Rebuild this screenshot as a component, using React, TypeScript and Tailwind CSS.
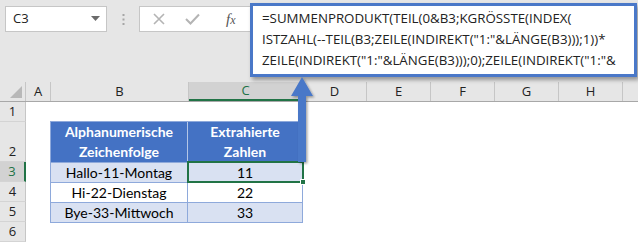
import React from "react";

const cols = [
  { l: "A", w: "w-[25px]" },
  { l: "B", w: "w-[138px]" },
  { l: "C", w: "w-[114px]" },
  { l: "D", w: "w-[64px]" },
  { l: "E", w: "w-[64px]" },
  { l: "F", w: "w-[64px]" },
  { l: "G", w: "w-[64px]" },
  { l: "H", w: "w-[64px]" },
];

const rows = [
  { n: "1", h: "h-[20px]" },
  { n: "2", h: "h-[40px]" },
  { n: "3", h: "h-[20px]", sel: true },
  { n: "4", h: "h-[20px]" },
  { n: "5", h: "h-[20px]" },
  { n: "6", h: "h-[20px]" },
];

const data = [
  { b: "Hallo-11-Montag", c: "11", bg: "bg-[#d9e1f2]" },
  { b: "Hi-22-Dienstag", c: "22", bg: "bg-white" },
  { b: "Bye-33-Mittwoch", c: "33", bg: "bg-[#d9e1f2]" },
];

export default function App() {
  return (
    <div className="relative w-[638px] h-[243px] overflow-hidden bg-white font-['Lato',sans-serif] text-black">
      {/* Formula bar area */}
      <div className="h-[82px] bg-[#e6e6e6] flex items-start pt-[6px] pl-[5px]">
        <div className="w-[102px] h-[26px] bg-white border border-[#c6c6c6] flex items-center justify-between pl-[7px] pr-[6px]">
          <span className="font-['Open_Sans',sans-serif] text-[13px] text-[#222]">C3</span>
          <svg width="9" height="6" viewBox="0 0 9 6">
            <path d="M0 0 L9 0 L4.5 5 Z" fill="#6b6b6b" />
          </svg>
        </div>
        <div className="w-[32px] h-[26px] flex items-center justify-center">
          <svg width="3" height="11" viewBox="0 0 3 11">
            <rect x="0.5" y="0" width="2" height="2" fill="#a6a6a6" />
            <rect x="0.5" y="4.5" width="2" height="2" fill="#a6a6a6" />
            <rect x="0.5" y="9" width="2" height="2" fill="#a6a6a6" />
          </svg>
        </div>
        <div className="w-[130px] h-[26px] bg-white border border-[#c6c6c6] flex items-center pl-[13px] gap-[20px]">
          <svg width="12" height="12" viewBox="0 0 12 12">
            <path d="M1 1 L11 11 M11 1 L1 11" stroke="#b4b4b4" strokeWidth="1.6" />
          </svg>
          <svg width="15" height="12" viewBox="0 0 15 12">
            <path d="M1 6 L5.5 10.5 L14 1.5" stroke="#b4b4b4" strokeWidth="2" fill="none" />
          </svg>
          <span className="font-['Liberation_Serif',serif] italic text-[15px] text-[#555] ml-[6px]">
            f<span className="text-[12px]">x</span>
          </span>
        </div>
      </div>

      {/* Column header row */}
      <div className="flex h-[20px] bg-[#e6e6e6] border-b border-[#a8a8a8]">
        <div className="w-[26px] h-full border-r border-[#c6c6c6] relative">
          <svg className="absolute left-[10px] top-[4px]" width="12" height="12" viewBox="0 0 12 12">
            <path d="M12 0 L12 12 L0 12 Z" fill="#b8b8b8" />
          </svg>
        </div>
        {cols.map((c) => (
          <div
            key={c.l}
            className={`${c.w} h-full border-r border-[#c6c6c6] flex items-center justify-center font-['Open_Sans',sans-serif] text-[13px] ${
              c.l === "C" ? "bg-[#d2d2d2] text-[#217346] border-b-2 border-b-[#217346]" : "text-[#222]"
            }`}
          >
            {c.l}
          </div>
        ))}
        <div className="flex-1 h-full" />
      </div>

      {/* Body */}
      <div className="flex">
        <div className="w-[26px] flex flex-col bg-[#e6e6e6]">
          {rows.map((r) => (
            <div
              key={r.n}
              className={`${r.h} border-b border-[#d4d4d4] flex items-end justify-center font-['Open_Sans',sans-serif] text-[13px] leading-[19px] ${
                r.sel
                  ? "bg-[#d2d2d2] text-[#217346] border-r-2 border-r-[#217346]"
                  : "text-[#222] border-r border-r-[#c6c6c6]"
              }`}
            >
              {r.n}
            </div>
          ))}
        </div>
        <div className="flex-1 pl-[24px] pt-[19px]">
          <div className="w-[253px] border-l border-t border-[#8ea9db] text-[14px] leading-[19px]">
            <div className="flex h-[41px]">
              <div className="w-[137px] h-full bg-[#4472c4] border-r border-[#b4c6e7] border-b border-b-[#8ea9db] flex flex-col items-center justify-center font-bold text-white leading-[20px]">
                <span>Alphanumerische</span>
                <span>Zeichenfolge</span>
              </div>
              <div className="w-[115px] h-full bg-[#4472c4] border-r border-[#8ea9db] border-b border-b-[#8ea9db] flex flex-col items-center justify-center font-bold text-white leading-[20px]">
                <span>Extrahierte</span>
                <span>Zahlen</span>
              </div>
            </div>
            {data.map((d) => (
              <div key={d.c} className={`flex h-[20px] ${d.bg}`}>
                <div className="w-[137px] h-full border-r border-b border-[#8ea9db] flex items-center justify-center">
                  {d.b}
                </div>
                <div className="w-[115px] h-full border-r border-b border-[#8ea9db] flex items-center justify-center">
                  {d.c}
                </div>
              </div>
            ))}
          </div>
        </div>
      </div>

      {/* Selection on C3 */}
      <div className="absolute left-[187px] top-[161px] w-[117px] h-[22px] border-2 border-[#217346]" />
      <div className="absolute left-[300px] top-[179px] w-[6px] h-[6px] bg-[#217346] border border-white" />

      {/* Formula popup */}
      <div className="absolute left-[250px] top-[3px] w-[387px] h-[74px] bg-white border-[3px] border-[#4a78c8] shadow-[2px_3px_4px_rgba(0,0,0,0.35)] pl-[9px] pt-[2px] font-['Open_Sans',sans-serif] text-[13.3px] leading-[21px] text-[#222] whitespace-nowrap">
        <div>=SUMMENPRODUKT(TEIL(0&amp;B3;KGRÖSSTE(INDEX(</div>
        <div>ISTZAHL(--TEIL(B3;ZEILE(INDIREKT("1:"&amp;LÄNGE(B3)));1))*</div>
        <div>ZEILE(INDIREKT("1:"&amp;LÄNGE(B3)));0);ZEILE(INDIREKT("1:"&amp;</div>
      </div>

      {/* Arrow */}
      <svg className="absolute left-[288px] top-[76px]" width="28" height="90" viewBox="0 0 28 90">
        <defs>
          <filter id="sh" x="-50%" y="-20%" width="200%" height="150%">
            <feDropShadow dx="1.5" dy="1.5" stdDeviation="1.2" floodColor="#000" floodOpacity="0.35" />
          </filter>
        </defs>
        <path d="M14 1 L25 20 L18 20 L18 86 L10 86 L10 20 L3 20 Z" fill="#4a78c8" filter="url(#sh)" />
      </svg>
    </div>
  );
}
